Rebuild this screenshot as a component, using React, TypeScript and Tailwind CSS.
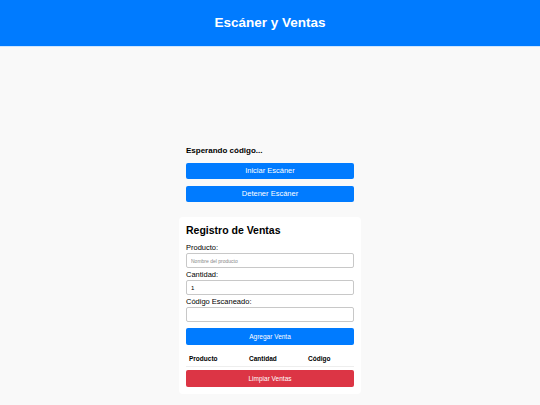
import React, { useState } from 'react';

const font = { fontFamily: '"Liberation Sans", Arial, sans-serif' };

export default function App() {
  const [producto, setProducto] = useState('');
  const [cantidad, setCantidad] = useState('1');
  const [codigo, setCodigo] = useState('');

  return (
    <div className="min-h-[405px] bg-[#f9f9f9] text-black" style={font}>
      <header className="h-[47px] bg-[#007bff] flex items-center justify-center border-b border-[#cfe6ff]">
        <h1 className="text-[13.5px] font-bold text-white">Escáner y Ventas</h1>
      </header>

      <main className="w-[182px] mx-auto flex flex-col">
        {/* scanner view placeholder */}
        <div className="h-[99px]" />

        <section className="px-[7px] flex flex-col">
          <p className="text-[8px] font-bold leading-[10px] mb-[7px]">Esperando código...</p>
          <button className="h-[16px] rounded-[2px] bg-[#007bff] text-white text-[7.5px] mb-[7px]">
            Iniciar Escáner
          </button>
          <button className="h-[16px] rounded-[2px] bg-[#007bff] text-white text-[7.5px]">
            Detener Escáner
          </button>
        </section>

        <section className="mt-[15px] bg-white rounded-[4px] px-[7px] pt-[7px] pb-[7px] flex flex-col">
          <h2 className="text-[10.5px] font-bold leading-[12px] mb-[7px]">Registro de Ventas</h2>

          <label className="text-[7.5px] leading-[9px] mb-[1px]">Producto:</label>
          <input
            value={producto}
            onChange={e => setProducto(e.target.value)}
            placeholder="Nombre del producto"
            className="h-[15px] border border-[#c8c8c8] rounded-[2px] px-[4px] text-[5px] placeholder:text-[#888] outline-none mb-[2px]"
          />

          <label className="text-[7.5px] leading-[9px] mb-[1px]">Cantidad:</label>
          <input
            value={cantidad}
            onChange={e => setCantidad(e.target.value)}
            className="h-[15px] border border-[#c8c8c8] rounded-[2px] px-[4px] text-[6px] outline-none mb-[2px]"
          />

          <label className="text-[7.5px] leading-[9px] mb-[1px]">Código Escaneado:</label>
          <input
            value={codigo}
            onChange={e => setCodigo(e.target.value)}
            className="h-[15px] border border-[#c8c8c8] rounded-[2px] px-[4px] text-[6px] outline-none mb-[6px]"
          />

          <button className="h-[17px] rounded-[2px] bg-[#007bff] text-white text-[6.5px]">
            Agregar Venta
          </button>

          <table className="w-full mt-[6px] mb-[3px] text-[6.5px] text-black">
            <thead>
              <tr className="border-b border-[#eee]">
                <th className="text-left font-bold leading-[9px] py-[3px] pl-[3px] w-[63px]">Producto</th>
                <th className="text-left font-bold leading-[9px] py-[3px] w-[59px]">Cantidad</th>
                <th className="text-left font-bold leading-[9px] py-[3px]">Código</th>
              </tr>
            </thead>
            <tbody />
          </table>

          <button className="h-[17px] rounded-[2px] bg-[#dc3545] text-white text-[6.5px]">
            Limpiar Ventas
          </button>
        </section>
      </main>
    </div>
  );
}
